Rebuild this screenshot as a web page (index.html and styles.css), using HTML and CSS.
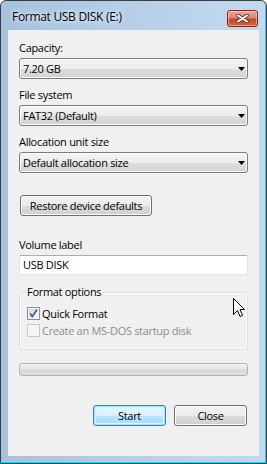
FILE: index.html
```html
<!DOCTYPE html>
<html lang="en">
<head>
    <meta charset="UTF-8">
    <meta name="viewport" content="width=device-width, initial-scale=1.0">
    <title>Format USB DISK (E:)</title>
    <link rel="stylesheet" href="styles.css">
</head>
<body>
    <div class="window">
        <div class="titlebar">
            <span class="title">Format USB DISK (E:)</span>
            <button class="close-x" aria-label="Close">
                <svg width="13" height="9" viewBox="0 0 13 9">
                    <path d="M2 1.5 L11 7.5 M11 1.5 L2 7.5" stroke="#5a2a22" stroke-width="3.4" stroke-linecap="round"/>
                    <path d="M2 1.5 L11 7.5 M11 1.5 L2 7.5" stroke="#ffffff" stroke-width="2" stroke-linecap="round"/>
                </svg>
            </button>
        </div>

        <div class="client">
            <div class="field-label">Capacity:</div>
            <div class="combo"><span>7.20 GB</span><svg class="arrow" width="7" height="4"><polygon points="0,0 7,0 3.5,4" fill="#000"/></svg></div>

            <div class="field-label">File system</div>
            <div class="combo"><span>FAT32 (Default)</span><svg class="arrow" width="7" height="4"><polygon points="0,0 7,0 3.5,4" fill="#000"/></svg></div>

            <div class="field-label">Allocation unit size</div>
            <div class="combo last"><span>Default allocation size</span><svg class="arrow" width="7" height="4"><polygon points="0,0 7,0 3.5,4" fill="#000"/></svg></div>

            <button class="btn restore">Restore device defaults</button>

            <div class="field-label">Volume label</div>
            <div class="textbox">USB DISK</div>

            <fieldset class="group">
                <legend>Format options</legend>
                <div class="check-row">
                    <span class="checkbox">
                        <svg width="11" height="11" viewBox="0 0 11 11"><path d="M2 5.5 L4.3 8.5 L9 1.5" fill="none" stroke="#3c5fa8" stroke-width="1.8"/></svg>
                    </span>
                    Quick Format
                </div>
                <div class="check-row disabled">
                    <span class="checkbox"></span>
                    Create an MS-DOS startup disk
                </div>
            </fieldset>

            <div class="progress"></div>

            <div class="actions">
                <button class="btn default">Start</button>
                <button class="btn">Close</button>
            </div>

            <!-- mouse pointer captured in the screenshot -->
            <svg class="cursor" width="13" height="20" viewBox="0 0 13 20">
                <path d="M0.5 0.5 V16.5 L4.5 12.5 L7 18.5 L9.5 17.5 L7 11.5 H11.5 Z" fill="#fff" stroke="#000" stroke-width="1" stroke-linejoin="miter"/>
            </svg>
        </div>
    </div>
</body>
</html>
```

FILE: styles.css
```css
* { margin: 0; padding: 0; box-sizing: border-box; }
body {
    background: #ffffff;
    font-family: "Open Sans", "Noto Sans", sans-serif;
    font-size: 11px;
    letter-spacing: -0.3px;
    color: #000;
}
.window {
    width: 267px;
    height: 464px;
    border: 1px solid #3a3f46;
    border-radius: 6px 6px 0 0;
    background: linear-gradient(90deg, #a7c1de 0%, #b9d0e9 55%, #c4d9ee 100%);
    box-shadow: inset -1px -1px 0 #3fc4ea;
    display: flex;
    flex-direction: column;
}
.titlebar {
    height: 29px;
    display: flex;
    justify-content: space-between;
    align-items: flex-start;
    padding: 0 8px 0 11px;
}
.title {
    margin-top: 8px;
    line-height: 15px;
    font-size: 12px;
    text-shadow: 0 0 6px #e6f0fa, 0 0 3px #e6f0fa;
}
.close-x {
    margin-top: 9px;
    width: 31px;
    height: 17px;
    border: 1px solid #7a2a1c;
    border-radius: 3px;
    background: linear-gradient(#e9a99a 0%, #d98570 45%, #c2452c 55%, #cf6a48 100%);
    box-shadow: inset 0 0 0 1px rgba(255, 220, 210, 0.5);
    display: flex;
    align-items: center;
    justify-content: center;
}
.client {
    position: relative;
    flex: 1;
    margin: 0 7px 7px 7px;
    background: #f0f0f0;
    padding: 10px 11px 0 11px;
}
.field-label {
    line-height: 15px;
    margin-bottom: 3px;
}
.combo {
    height: 21px;
    border: 1px solid #7b7b7b;
    border-radius: 3px;
    background: linear-gradient(#f3f3f3 0%, #ececec 50%, #dedede 51%, #d2d2d2 100%);
    box-shadow: inset 0 0 0 1px #fbfbfb;
    display: flex;
    align-items: center;
    justify-content: space-between;
    padding: 0 2px 0 3px;
    margin-bottom: 8px;
}
.combo.last { margin-bottom: 22px; }
.arrow { display: block; }
.btn {
    height: 21px;
    padding: 0;
    white-space: nowrap;
    border: 1px solid #707070;
    border-radius: 3px;
    background: linear-gradient(#f2f2f2 0%, #ebebeb 50%, #dddddd 51%, #cfcfcf 100%);
    box-shadow: inset 0 0 0 1px #fcfcfc;
    font-family: inherit;
    font-size: 11px;
    letter-spacing: inherit;
    color: #000;
}
.restore {
    display: block;
    width: 132px;
    margin: 0 0 21px 1px;
}
.textbox {
    height: 20px;
    background: #fff;
    border: 1px solid #e2e3ea;
    border-top-color: #abadb3;
    border-radius: 2px;
    line-height: 18px;
    padding-left: 3px;
    margin-bottom: 10px;
}
.group {
    border: 1px solid #d5dfe5;
    border-radius: 3px;
    padding: 6px 7px 10px 7px;
    box-shadow: inset 0 0 0 1px #fff;
    margin-bottom: 13px;
}
.group legend {
    line-height: 14px;
    padding: 0 2px;
    margin-left: -2px;
}
.check-row {
    height: 17px;
    display: flex;
    align-items: center;
    gap: 2px;
}
.checkbox {
    width: 13px;
    height: 13px;
    border: 1px solid #8e8f8f;
    background: linear-gradient(135deg, #cdd0d6 0%, #eeeeee 60%, #fafafa 100%);
    box-shadow: inset 0 0 0 1px #f4f4f4;
    display: flex;
    align-items: center;
    justify-content: center;
}
.check-row.disabled { color: #8d8d8d; }
.check-row.disabled .checkbox {
    border-color: #c9c9c9;
    background: #f4f4f4;
    box-shadow: none;
}
.progress {
    height: 13px;
    border: 1px solid #b2b2b2;
    border-radius: 3px;
    background: linear-gradient(#f4f4f4 0%, #e6e6e6 45%, #d6d6d6 55%, #e2e2e2 100%);
    margin-bottom: 29px;
}
.actions {
    display: flex;
    justify-content: flex-end;
    gap: 8px;
    padding-right: 1px;
}
.actions .btn { width: 73px; }
.btn.default {
    border-color: #3c7fb1;
    background: linear-gradient(#eaf6fd 0%, #d9f0fc 50%, #bee6fd 51%, #a7d9f5 100%);
    box-shadow: inset 0 0 0 1px #9fe0fb, inset 0 0 0 2px #def3fd;
}
.cursor {
    position: absolute;
    left: 225px;
    top: 268px;
}
```
